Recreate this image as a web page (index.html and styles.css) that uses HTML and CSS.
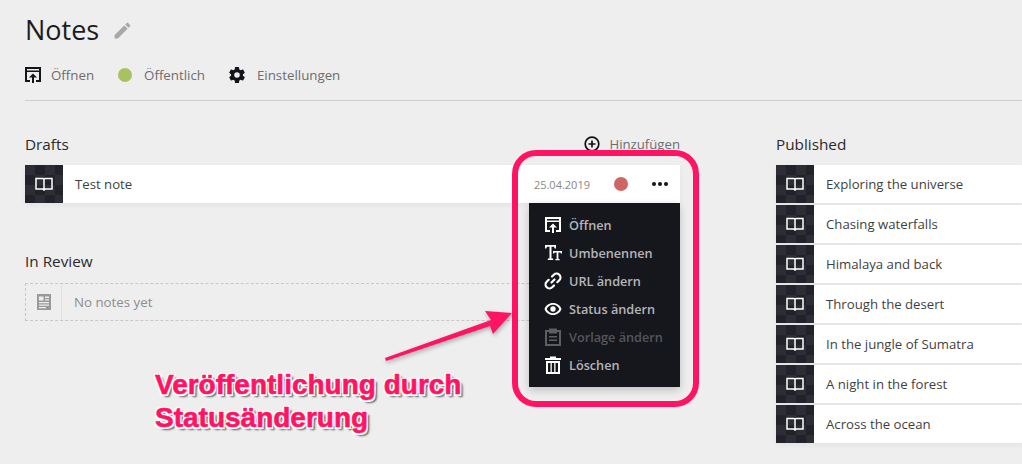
FILE: index.html
```html
<!DOCTYPE html>
<html lang="de">
<head>
    <meta charset="UTF-8">
    <title>Notes</title>
    <link rel="stylesheet" href="styles.css">
</head>
<body>
    <header class="head">
        <div class="title">
            <h1>Notes</h1>
            <svg class="pencil" viewBox="0 0 24 24"><path d="M3 17.25V21h3.75L17.81 9.94l-3.75-3.75L3 17.25zM20.71 7.04a1 1 0 0 0 0-1.41l-2.34-2.34a1 1 0 0 0-1.41 0l-1.83 1.83 3.75 3.75 1.83-1.83z"/></svg>
        </div>
        <nav class="actions">
            <a class="action">
                <svg class="ico" viewBox="1 1 16 16"><path d="M1 1h16v15h-5v-2h3V6H3v8h3v2H1zM3 3v1.500h12V3z" fill-rule="evenodd"/><path d="M9 7.500l4 4h-3V17H8v-5.500H5z"/></svg>
                Öffnen
            </a>
            <a class="action">
                <span class="dot green"></span>
                Öffentlich
            </a>
            <a class="action">
                <svg class="ico" viewBox="2 2 20 20"><path d="M19.430 12.980c.04-.32.07-.64.07-.98s-.03-.66-.07-.98l2.110-1.650c.19-.15.24-.42.120-.64l-2-3.460c-.12-.22-.39-.3-.61-.22l-2.490 1c-.52-.4-1.080-.73-1.690-.98l-.38-2.650A.49.49 0 0 0 14 2h-4c-.25 0-.46.18-.49.42l-.38 2.650c-.61.25-1.170.59-1.690.98l-2.490-1c-.23-.09-.49 0-.61.22l-2 3.460c-.13.22-.07.49.12.64l2.110 1.650c-.04.32-.07.65-.07.98s.03.66.07.98l-2.110 1.650c-.19.15-.24.42-.12.64l2 3.460c.12.22.39.3.61.22l2.490-1c.52.4 1.080.73 1.690.98l.38 2.650c.03.24.24.42.49.42h4c.25 0 .46-.18.49-.42l.38-2.650c.61-.25 1.170-.59 1.690-.98l2.490 1c.23.09.49 0 .61-.22l2-3.460c.12-.22.07-.49-.12-.64l-2.110-1.650zM12 15.500a3.500 3.500 0 1 1 0-7 3.500 3.500 0 0 1 0 7z"/></svg>
                Einstellungen
            </a>
        </nav>
    </header>

    <main class="board">
        <div class="col-left">
            <section class="group">
                <div class="group-head">
                    <h2>Drafts</h2>
                    <a class="add">
                        <svg class="add-ico" viewBox="0 0 16 16"><circle cx="8" cy="8" r="6.800" fill="none" stroke="#111" stroke-width="1.700"/><path d="M4.500 8h7M8 4.500v7" stroke="#111" stroke-width="1.700"/></svg>
                        Hinzufügen
                    </a>
                </div>
                <div class="row">
                    <div class="thumb"><svg class="book" viewBox="0 0 18 14"><path d="M1 1.500h7l1 1 1-1h7v10.500h-6.500l-1.500 1-1.500-1H1zM9 2.500V13" fill="none" stroke="#fff" stroke-width="1.500"/></svg></div>
                    <span class="row-name">Test note</span>
                    <span class="row-date">25.04.2019</span>
                    <span class="dot red"></span>
                    <span class="more"><i></i><i></i><i></i></span>
                </div>
            </section>

            <section class="group review">
                <h2>In Review</h2>
                <div class="empty">
                    <div class="empty-ico">
                        <svg viewBox="0 0 14 16" width="14" height="16"><path d="M0 0h14v16H0zM2 2.500v4h4.500v-4zM8 2.500V4h4V2.500zM8 5.200v1.300h4V5.200zM2 8v1.300h10V8zM2 10.500v1.300h10v-1.300zM2 13v1.300h7V13z" fill="#999" fill-rule="evenodd"/></svg>
                    </div>
                    <span class="empty-text">No notes yet</span>
                </div>
            </section>
        </div>

        <section class="group col-right">
            <div class="group-head"><h2>Published</h2></div>
            <div class="list">
                <div class="row"><div class="thumb"><svg class="book" viewBox="0 0 18 14"><path d="M1 1.500h7l1 1 1-1h7v10.500h-6.500l-1.500 1-1.500-1H1zM9 2.500V13" fill="none" stroke="#fff" stroke-width="1.500"/></svg></div><span class="row-name">Exploring the universe</span></div>
                <div class="row"><div class="thumb"><svg class="book" viewBox="0 0 18 14"><path d="M1 1.500h7l1 1 1-1h7v10.500h-6.500l-1.500 1-1.500-1H1zM9 2.500V13" fill="none" stroke="#fff" stroke-width="1.500"/></svg></div><span class="row-name">Chasing waterfalls</span></div>
                <div class="row"><div class="thumb"><svg class="book" viewBox="0 0 18 14"><path d="M1 1.500h7l1 1 1-1h7v10.500h-6.500l-1.500 1-1.500-1H1zM9 2.500V13" fill="none" stroke="#fff" stroke-width="1.500"/></svg></div><span class="row-name">Himalaya and back</span></div>
                <div class="row"><div class="thumb"><svg class="book" viewBox="0 0 18 14"><path d="M1 1.500h7l1 1 1-1h7v10.500h-6.500l-1.500 1-1.500-1H1zM9 2.500V13" fill="none" stroke="#fff" stroke-width="1.500"/></svg></div><span class="row-name">Through the desert</span></div>
                <div class="row"><div class="thumb"><svg class="book" viewBox="0 0 18 14"><path d="M1 1.500h7l1 1 1-1h7v10.500h-6.500l-1.500 1-1.500-1H1zM9 2.500V13" fill="none" stroke="#fff" stroke-width="1.500"/></svg></div><span class="row-name">In the jungle of Sumatra</span></div>
                <div class="row"><div class="thumb"><svg class="book" viewBox="0 0 18 14"><path d="M1 1.500h7l1 1 1-1h7v10.500h-6.500l-1.500 1-1.500-1H1zM9 2.500V13" fill="none" stroke="#fff" stroke-width="1.500"/></svg></div><span class="row-name">A night in the forest</span></div>
                <div class="row"><div class="thumb"><svg class="book" viewBox="0 0 18 14"><path d="M1 1.500h7l1 1 1-1h7v10.500h-6.500l-1.500 1-1.500-1H1zM9 2.500V13" fill="none" stroke="#fff" stroke-width="1.500"/></svg></div><span class="row-name">Across the ocean</span></div>
            </div>
        </section>
    </main>

    <!-- dropdown of the draft row -->
    <ul class="menu">
        <li><svg class="ico" viewBox="0 0 18 18"><path d="M1 1h16v15h-5v-2h3V6H3v8h3v2H1zM3 3v1.500h12V3z" fill-rule="evenodd"/><path d="M9 7.500l4 4h-3V17H8v-5.500H5z"/></svg>Öffnen</li>
        <li><svg class="ico" viewBox="0 0 18 18"><path d="M1 1h11v3.500h-1.300L10 2.800H7.500V14.500H9.200V16H3.800v-1.500H5.500V2.800H3L2.300 4.500H1z"/><path d="M9 7h9v2.600h-1.200l-.4-1.200H14.400V15h1.200v1.200h-4.200V15h1.200V8.400h-2l-.4 1.200H9z"/></svg>Umbenennen</li>
        <li><svg class="ico" viewBox="0 0 18 18" fill="none" stroke="#fff" stroke-width="2.200"><path d="M7.500 10.500l3-3M8 4.500l1.800-1.800a3.300 3.300 0 0 1 5.500 5.500l-2 2M10 13.500l-1.800 1.800a3.300 3.300 0 0 1-5.500-5.500l2-2" stroke-linecap="round"/></svg>URL ändern</li>
        <li><svg class="ico" viewBox="0 0 18 18"><path d="M9 3C5 3 1.700 5.500 0.500 9 1.700 12.500 5 15 9 15s7.300-2.500 8.500-6C16.300 5.500 13 3 9 3zm0 10.300C6.200 13.300 3.800 11.600 2.700 9 3.800 6.400 6.200 4.700 9 4.700s5.200 1.700 6.300 4.300c-1.100 2.600-3.500 4.300-6.300 4.300z" fill-rule="evenodd"/><circle cx="9" cy="9" r="2.700"/></svg>Status ändern</li>
        <li class="off"><svg class="ico" viewBox="0 0 18 18"><path d="M1 2h4V0.500h8V2h4v16H1zM3 4v12h12V4h-2v1.500H5V4zM5 8h8v1.500H5zM5 11.500h8V13H5z" fill-rule="evenodd"/></svg>Vorlage ändern</li>
        <li><svg class="ico" viewBox="0 0 18 18"><path d="M6 0.500h6V2h5v2H1V2h5zM2 5h14v13H2zM4 7v9h2.500V7zM7.800 7v9h2.400V7zM11.500 7v9H14V7z" fill-rule="evenodd"/></svg>Löschen</li>
    </ul>

    <!-- annotation drawn over the screenshot -->
    <div class="frame"></div>
    <svg class="arrow" viewBox="0 0 130 56" width="130" height="56"><path d="M1 51L107 13 101 4 128 6 109 27 106 19 2 54z" fill="#ff1464"/></svg>
    <p class="callout">Veröffentlichung durch<br>Statusänderung</p>
</body>
</html>
```

FILE: styles.css
```css
* {
  box-sizing: border-box;
}

html,
body {
  height: 100%;
}

body {
  margin: 0;
  padding: 0 0 0 25px;
  background: #eee;
  color: #222;
  font-family: "Open Sans", "Noto Sans", sans-serif;
  overflow: hidden;
  position: relative;
}

.head {
  height: 101px;
  border-bottom: 1px solid #cfcfcf;
  padding-top: 10px;
}

.title {
  display: flex;
  align-items: center;
  gap: 13px;
  height: 38px;
}

h1 {
  margin: 0;
  font-size: 27px;
  font-weight: 400;
  color: #1c1c1f;
}

.pencil {
  width: 21px;
  height: 21px;
  fill: #a8a8a8;
  margin-top: 2px;
}

.actions {
  display: flex;
  align-items: center;
  gap: 24px;
  margin-top: 16px;
  height: 22px;
}

.action {
  display: flex;
  align-items: center;
  gap: 12px;
  font-size: 13.300px;
  color: #6d6d6d;
}

.ico {
  width: 18px;
  height: 18px;
  flex: none;
  fill: #14151a;
}

.action .ico {
  width: 16px;
  height: 16px;
}

.action:first-child {
  gap: 10px;
}

.dot {
  display: block;
  width: 14px;
  height: 14px;
  border-radius: 50%;
  flex: none;
}

.green {
  background: #a9c261;
}

.red {
  background: #cf6666;
  margin-right: 24px;
}

.board {
  display: flex;
  gap: 96px;
  padding-top: 31px;
}

.col-left {
  width: 655px;
  flex: none;
}

.col-right {
  flex: 1;
}

.group-head {
  display: flex;
  justify-content: space-between;
  align-items: center;
  height: 24px;
  margin-bottom: 9px;
}

h2 {
  margin: 0;
  font-size: 15.300px;
  font-weight: 400;
  color: #2a2a2d;
}

.add {
  display: flex;
  align-items: center;
  gap: 9px;
  font-size: 13.200px;
  color: #6d6d6d;
}

.add-ico {
  width: 16px;
  height: 16px;
}

.row {
  display: flex;
  align-items: center;
  height: 38px;
  background: #fff;
  box-shadow: 0 2px 6px rgba(0, 0, 0, 0.05);
}

.list {
  display: flex;
  flex-direction: column;
  gap: 2px;
}

.thumb {
  display: flex;
  align-items: center;
  justify-content: center;
  width: 38px;
  height: 38px;
  flex: none;
  background: repeating-conic-gradient(#21222a 0 25%, #2c2d35 0 50%) 0 0 / 20px 20px;
}

.book {
  width: 18px;
  height: 14px;
}

.row-name {
  flex: 1;
  margin-left: 12px;
  font-size: 13.200px;
  color: #3f3f3f;
}

.row-date {
  font-size: 11px;
  color: #888;
  margin-right: 24px;
}

.more {
  display: flex;
  gap: 2px;
  margin-right: 12px;
}

.more i {
  width: 4px;
  height: 4px;
  border-radius: 50%;
  background: #14151a;
}

.review {
  margin-top: 47px;
}

.review h2 {
  height: 22px;
  line-height: 22px;
}

.empty {
  display: flex;
  align-items: center;
  height: 38px;
  margin-top: 11px;
  border: 1px dashed #c8c8c8;
}

.empty-ico {
  display: flex;
  align-items: center;
  justify-content: center;
  width: 36px;
  height: 100%;
  border-right: 1px solid #e0e0e0;
}

.empty-text {
  margin-left: 12px;
  font-size: 13.300px;
  color: #8d8d8d;
}

.menu {
  position: absolute;
  left: 529px;
  top: 203px;
  width: 151px;
  height: 184px;
  margin: 0;
  padding: 8px 0 0 15px;
  list-style: none;
  background: #16171c;
  box-shadow: 0 3px 8px rgba(0, 0, 0, 0.2);
}

.menu li {
  display: flex;
  align-items: center;
  gap: 7px;
  height: 28px;
  font-size: 12.700px;
  font-weight: 600;
  color: #b5b5b8;
}

.menu .ico {
  fill: #fff;
}

.menu .ico[fill="none"] {
  fill: none;
}

.menu .off {
  color: #55565b;
}

.menu .off .ico {
  fill: #5d5e62;
}

.frame {
  position: absolute;
  left: 512px;
  top: 150px;
  width: 187px;
  height: 257px;
  border: 6px solid #ff1464;
  border-radius: 24px;
}

.arrow {
  position: absolute;
  left: 384px;
  top: 307px;
  filter: drop-shadow(1px 2px 2px rgba(0, 0, 0, 0.3));
}

.callout {
  position: absolute;
  left: 155px;
  top: 368px;
  margin: 0;
  font-family: "Liberation Sans", Arial, sans-serif;
  font-size: 28px;
  font-weight: 700;
  line-height: 33px;
  color: #ff1464;
  -webkit-text-stroke: 0.6px #ff1464;
  text-shadow: -1.500px -1.500px 0 #fff, 1.500px -1.500px 0 #fff, -1.500px 1.500px 0 #fff, 1.500px 1.500px 0 #fff, 3px 3px 2px rgba(0, 0, 0, 0.6);
}
```
